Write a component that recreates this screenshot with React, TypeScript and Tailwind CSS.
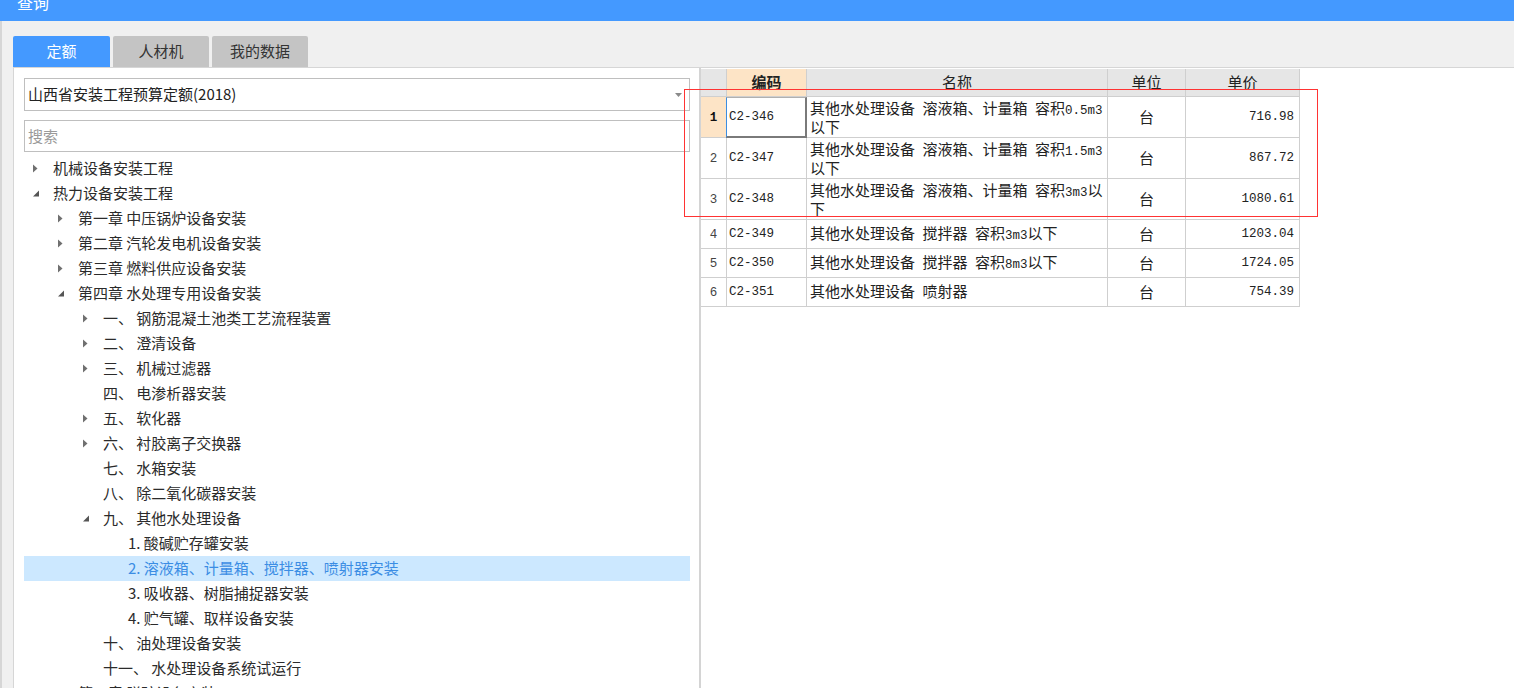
import React from "react";

type Node = { lv: number; arrow?: "r" | "d"; t: string; sel?: boolean };

const tree: Node[] = [
  { lv: 0, arrow: "r", t: "机械设备安装工程" },
  { lv: 0, arrow: "d", t: "热力设备安装工程" },
  { lv: 1, arrow: "r", t: "第一章 中压锅炉设备安装" },
  { lv: 1, arrow: "r", t: "第二章 汽轮发电机设备安装" },
  { lv: 1, arrow: "r", t: "第三章 燃料供应设备安装" },
  { lv: 1, arrow: "d", t: "第四章 水处理专用设备安装" },
  { lv: 2, arrow: "r", t: "一、 钢筋混凝土池类工艺流程装置" },
  { lv: 2, arrow: "r", t: "二、 澄清设备" },
  { lv: 2, arrow: "r", t: "三、 机械过滤器" },
  { lv: 2, t: "四、 电渗析器安装" },
  { lv: 2, arrow: "r", t: "五、 软化器" },
  { lv: 2, arrow: "r", t: "六、 衬胶离子交换器" },
  { lv: 2, t: "七、 水箱安装" },
  { lv: 2, t: "八、 除二氧化碳器安装" },
  { lv: 2, arrow: "d", t: "九、 其他水处理设备" },
  { lv: 3, t: "1. 酸碱贮存罐安装" },
  { lv: 3, t: "2. 溶液箱、计量箱、搅拌器、喷射器安装", sel: true },
  { lv: 3, t: "3. 吸收器、树脂捕捉器安装" },
  { lv: 3, t: "4. 贮气罐、取样设备安装" },
  { lv: 2, t: "十、 油处理设备安装" },
  { lv: 2, t: "十一、 水处理设备系统试运行" },
  { lv: 1, arrow: "r", t: "第五章 脱硫设备安装" },
];

const indent = ["w-[29px]", "w-[54px]", "w-[79px]", "w-[104px]"];

type Row = { n: number; code: string; name: string[]; unit: string; price: string; tall: boolean };

const rows: Row[] = [
  { n: 1, code: "C2-346", name: ["其他水处理设备 溶液箱、计量箱 容积0.5m3", "以下"], unit: "台", price: "716.98", tall: true },
  { n: 2, code: "C2-347", name: ["其他水处理设备 溶液箱、计量箱 容积1.5m3", "以下"], unit: "台", price: "867.72", tall: true },
  { n: 3, code: "C2-348", name: ["其他水处理设备 溶液箱、计量箱 容积3m3以", "下"], unit: "台", price: "1080.61", tall: true },
  { n: 4, code: "C2-349", name: ["其他水处理设备 搅拌器 容积3m3以下"], unit: "台", price: "1203.04", tall: false },
  { n: 5, code: "C2-350", name: ["其他水处理设备 搅拌器 容积8m3以下"], unit: "台", price: "1724.05", tall: false },
  { n: 6, code: "C2-351", name: ["其他水处理设备 喷射器"], unit: "台", price: "754.39", tall: false },
];

function Mixed({ text }: { text: string }) {
  // latin runs in half-width mono, the rest in the CJK face
  const parts = text.match(/[\x20-\x7e]+|[^\x20-\x7e]+/g) || [];
  return (
    <>
      {parts.map((p, i) =>
        /^[\x20-\x7e]+$/.test(p) ? (
          <span key={i} className="font-['Liberation_Mono',monospace] text-[12.5px] whitespace-pre">
            {p}
          </span>
        ) : (
          <span key={i}>{p}</span>
        )
      )}
    </>
  );
}

function Arrow({ dir }: { dir?: "r" | "d" }) {
  if (!dir) return <span className="w-[8px] h-[9px]" />;
  return (
    <svg width="8" height="9" viewBox="0 0 8 9">
      {dir === "r" ? (
        <polygon points="1,0.5 5.5,4.5 1,8.5" fill="#707070" />
      ) : (
        <polygon points="7,1.5 7,7.5 1,7.5" fill="#555555" />
      )}
    </svg>
  );
}

export default function App() {
  return (
    <div className="w-[1514px] h-[688px] overflow-hidden bg-[#f0f0f0] flex flex-col relative font-['Noto_Sans_CJK_SC',sans-serif] text-[15px] text-[#222]">
      {/* Title bar */}
      <div className="h-[21px] bg-[#4499ff] shrink-0 overflow-hidden">
        <div className="pl-[17px] -mt-[8px] text-white text-[16px] leading-[20px]">查询</div>
      </div>

      <div className="flex-1 flex flex-col border-l-2 border-[#d6d6d6] pl-[11px] min-h-0">
        {/* Tabs */}
        <div className="h-[46px] pt-[15px] flex gap-[3px] shrink-0">
          <div className="w-[97px] bg-[#4499ff] text-white rounded-t-[2px] flex items-center justify-center">定额</div>
          <div className="w-[96px] bg-[#c4c4c4] text-[#333] rounded-t-[2px] flex items-center justify-center">人材机</div>
          <div className="w-[96px] bg-[#c4c4c4] text-[#333] rounded-t-[2px] flex items-center justify-center">我的数据</div>
        </div>

        {/* Content */}
        <div className="flex-1 flex border-t border-l border-[#d6d6d6] bg-white min-h-0">
          {/* Left tree panel */}
          <div className="w-[685px] shrink-0 pl-[10px] pr-[9px] pt-[10px] overflow-hidden">
            <div className="h-[33px] border border-[#bfbfbf] flex items-center justify-between pl-[3px] pr-[7px]">
              <span className="leading-[20px] -mt-[1px]">山西省安装工程预算定额(2018)</span>
              <svg width="7" height="4" viewBox="0 0 7 4">
                <polygon points="0,0 7,0 3.5,4" fill="#8a8a8a" />
              </svg>
            </div>
            <div className="h-[32px] mt-[9px] border border-[#bfbfbf] flex items-center pl-[3px] text-[#9a9a9a]">
              搜索
            </div>
            <div className="mt-[4px]">
              {tree.map((n, i) => (
                <div
                  key={i}
                  className={`h-[25px] flex items-center whitespace-nowrap ${
                    n.sel ? "bg-[#cce8ff] text-[#3b8de4]" : "text-[#2b2b2b]"
                  }`}
                >
                  <div className={`${indent[n.lv]} shrink-0 flex justify-end pr-[13px]`}>
                    <Arrow dir={n.arrow} />
                  </div>
                  <span className="leading-[20px] -mt-[1px]">{n.t}</span>
                </div>
              ))}
            </div>
          </div>

          <div className="w-[2px] bg-[#d4d4d4] shrink-0" />

          {/* Right grid */}
          <div className="flex-1 pt-[1px]">
            <div className="w-[599px]">
              <div className="grid grid-cols-[26px_80px_301px_78px_114px] h-[28px] bg-[#e6e6e6]">
                <div className="border-r border-b border-[#cfcfcf]" />
                <div className="border-r border-b border-[#cfcfcf] bg-[#fde4c6] flex items-center justify-center font-bold">编码</div>
                <div className="border-r border-b border-[#cfcfcf] flex items-center justify-center">名称</div>
                <div className="border-r border-b border-[#cfcfcf] flex items-center justify-center">单位</div>
                <div className="border-r border-b border-[#cfcfcf] flex items-center justify-center">单价</div>
              </div>
              {rows.map((r) => (
                <div
                  key={r.n}
                  className={`grid grid-cols-[26px_80px_301px_78px_114px] ${r.tall ? "h-[41px]" : "h-[29px]"}`}
                >
                  <div
                    className={`border-r border-b border-[#cfcfcf] flex items-center justify-center pt-[3px] font-['Liberation_Mono',monospace] text-[12.5px] ${
                      r.n === 1 ? "bg-[#fde4c6] font-bold text-[#111]" : "bg-white text-[#444]"
                    }`}
                  >
                    {r.n}
                  </div>
                  <div
                    className={`border-b flex items-center pl-[2px] font-['Liberation_Mono',monospace] text-[12.5px] ${
                      r.n === 1
                        ? "border-l border-l-[#3c8de0] border-t border-t-[#b0b0b0] border-r-2 border-r-[#7a7a7a] border-b-2 border-b-[#7a7a7a] -ml-px"
                        : "border-r border-[#cfcfcf]"
                    }`}
                  >
                    {r.code}
                  </div>
                  <div
                    className={`border-r border-b border-[#cfcfcf] pl-[3px] leading-[16px] flex flex-col ${
                      r.tall ? "pt-[3px]" : "justify-center"
                    }`}
                  >
                    {r.name.map((l, i) => (
                      <div key={i} className="whitespace-nowrap">
                        <Mixed text={l} />
                      </div>
                    ))}
                  </div>
                  <div className="border-r border-b border-[#cfcfcf] flex items-center justify-center pt-[1px]">
                    {r.unit}
                  </div>
                  <div className="border-r border-b border-[#cfcfcf] flex items-center justify-end pr-[5px] font-['Liberation_Mono',monospace] text-[12.5px]">
                    {r.price}
                  </div>
                </div>
              ))}
            </div>
          </div>
        </div>
      </div>

      {/* red annotation box */}
      <div className="absolute left-[684px] top-[89px] w-[634px] h-[128px] border border-[#ff3333] pointer-events-none" />
    </div>
  );
}
